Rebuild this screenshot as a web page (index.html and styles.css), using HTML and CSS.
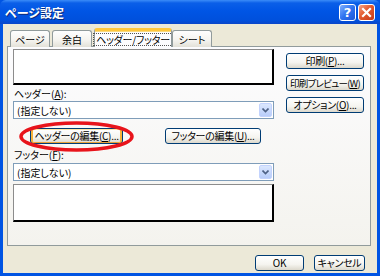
FILE: index.html
```html
<!DOCTYPE html>
<html lang="ja">
<head>
    <meta charset="UTF-8">
    <meta name="viewport" content="width=device-width, initial-scale=1.0">
    <title>ページ設定</title>
    <link rel="stylesheet" href="styles.css">
</head>
<body>
    <div class="window">
        <div class="titlebar">
            <span class="title">ページ設定</span>
            <div class="caption-buttons">
                <span class="cap help">?</span>
                <span class="cap close">
                    <svg width="11" height="11" viewBox="0 0 11 11"><path d="M2 2 L9 9 M9 2 L2 9" stroke="#fff" stroke-width="2.2" stroke-linecap="square"/></svg>
                </span>
            </div>
        </div>
        <div class="client">
            <div class="tabs">
                <div class="tab t-page">ページ</div>
                <div class="tab t-margin">余白</div>
                <div class="tab active"><span class="focus">ヘッダー/フッター</span></div>
                <div class="tab t-sheet">シート</div>
            </div>
            <div class="panel">
                <div class="left">
                    <div class="preview header-preview"></div>
                    <div class="label">ヘッダー(<u>A</u>):</div>
                    <div class="select">
                        <span>(指定しない)</span>
                        <span class="arrow">
                            <svg width="7" height="5" viewBox="0 0 7 5"><path d="M0.5 0.5 L3.5 3.5 L6.5 0.5" fill="none" stroke="#4d6185" stroke-width="1.6"/></svg>
                        </span>
                    </div>
                    <div class="edit-row">
                        <button class="btn edit-header">ヘッダーの編集(<u>C</u>)...</button>
                        <button class="btn edit-footer">フッターの編集(<u>U</u>)...</button>
                        <svg class="mark" width="115" height="31" viewBox="0 0 115 31">
                            <ellipse cx="57.5" cy="15.5" rx="55.5" ry="13.5" fill="none" stroke="#e8141b" stroke-width="3.5"/>
                        </svg>
                    </div>
                    <div class="label footer-label">フッター(<u>F</u>):</div>
                    <div class="select">
                        <span>(指定しない)</span>
                        <span class="arrow">
                            <svg width="7" height="5" viewBox="0 0 7 5"><path d="M0.5 0.5 L3.5 3.5 L6.5 0.5" fill="none" stroke="#4d6185" stroke-width="1.6"/></svg>
                        </span>
                    </div>
                    <div class="preview footer-preview"></div>
                </div>
                <div class="right">
                    <button class="btn">印刷(<u>P</u>)...</button>
                    <button class="btn tight">印刷プレビュー(<u>W</u>)</button>
                    <button class="btn">オプション(<u>O</u>)...</button>
                </div>
            </div>
            <div class="actions">
                <button class="btn ok">OK</button>
                <button class="btn cancel">キャンセル</button>
            </div>
        </div>
    </div>
</body>
</html>
```

FILE: styles.css
```css
body {
    margin: 0;
    padding: 0;
    font-family: "Noto Sans CJK JP", "Noto Sans", sans-serif;
    font-size: 10px;
    color: #000;
    background: #ece9d8;
    white-space: nowrap;
}
.window {
    width: 380px;
    height: 276px;
    display: flex;
    flex-direction: column;
    box-sizing: border-box;
    background: #0054e3;
}
.titlebar {
    height: 24px;
    flex: none;
    display: flex;
    align-items: center;
    justify-content: space-between;
    background: linear-gradient(#3b8cf8 0, #0b5fe8 3px, #0055e5 45%, #0050dc 85%, #0a46c8 100%);
    border-radius: 6px 6px 0 0;
}
.title {
    color: #fff;
    font-weight: bold;
    font-size: 12px;
    padding-left: 5px;
    text-shadow: 1px 1px 0 #0b2a7a;
    font-feature-settings: "palt";
}
.caption-buttons {
    display: flex;
    gap: 2px;
    padding-right: 5px;
    margin-top: 1px;
}
.cap {
    width: 15px;
    height: 15px;
    border: 1px solid #fff;
    border-radius: 3px;
    display: flex;
    align-items: center;
    justify-content: center;
    color: #fff;
    font-family: "DejaVu Sans", sans-serif;
    font-weight: bold;
    font-size: 13px;
}
.help {
    background: linear-gradient(135deg, #7fb0ff 0, #2f73f0 50%, #1d55d8 100%);
}
.close {
    background: linear-gradient(135deg, #f5a386 0, #e35a2e 45%, #c53a1a 100%);
}
.client {
    flex: 1;
    margin: 0 3px 3px;
    background: #ece9d8;
    padding: 4px 6px 0 4px;
    display: flex;
    flex-direction: column;
}
.tabs {
    display: flex;
    align-items: flex-end;
    height: 19px;
    padding-left: 3px;
    margin-bottom: -1px;
    position: relative;
    z-index: 1;
}
.tab {
    height: 17px;
    box-sizing: border-box;
    border: 1px solid #919b9c;
    border-bottom: none;
    border-radius: 3px 3px 0 0;
    background: linear-gradient(#fefefe, #f4f3ee 60%, #e3e1d8);
    display: flex;
    align-items: center;
    justify-content: center;
    font-feature-settings: "palt";
    margin-right: 2px;
}
.t-page { width: 40px; }
.t-margin { width: 40px; }
.t-sheet { width: 40px; margin-left: -2px; }
.tab.active {
    width: 78px;
    height: 19px;
    margin-left: 0;
    background: #fcfcfe;
    border-top: 3px solid #ffc73c;
    box-shadow: inset 0 1px 0 #fbd97c;
    border-radius: 3px 3px 0 0;
    letter-spacing: -0.2px;
}
.focus {
    border: 1px dotted #555;
    padding: 0 2px;
    line-height: 11px;
}
.panel {
    height: 200px;
    box-sizing: border-box;
    border: 1px solid #919b9c;
    background: linear-gradient(#fcfcfe, #f4f3ee);
    display: flex;
    gap: 12px;
    padding: 2px 6px 0 5px;
}
.left {
    width: 263px;
    display: flex;
    flex-direction: column;
}
.preview {
    background: #fff;
    border-top: 1px solid #8c8c8c;
    border-left: 1px solid #8c8c8c;
    border-right: 2px solid #000;
    border-bottom: 2px solid #000;
    box-sizing: border-box;
}
.header-preview { height: 36px; }
.footer-preview { height: 38px; margin-top: 3px; }
.label {
    height: 16px;
    line-height: 13px;
    padding-top: 2px;
    box-sizing: border-box;
    padding-left: 1px;
    font-feature-settings: "palt";
}
.footer-label {
    height: 19px;
    padding-top: 4px;
}
.select {
    height: 18px;
    box-sizing: border-box;
    border: 1px solid #7f9db9;
    background: #fff;
    display: flex;
    align-items: center;
    justify-content: space-between;
    padding: 0 1px 0 3px;
    font-feature-settings: "palt";
}
.arrow {
    width: 13px;
    height: 14px;
    box-sizing: border-box;
    border: 1px solid #c3d3fd;
    border-radius: 2px;
    background: linear-gradient(#dbe7fe, #b8cdfa);
    display: flex;
    align-items: center;
    justify-content: center;
}
.edit-row {
    position: relative;
    display: flex;
    justify-content: space-between;
    margin-top: 9px;
    padding: 0 13px 0 17px;
}
.btn {
    font-family: inherit;
    font-size: 10px;
    height: 16px;
    padding: 0;
    box-sizing: border-box;
    border: 1px solid #003c74;
    border-radius: 3px;
    background: linear-gradient(#ffffff, #f5f4ef 60%, #dcd8cc);
    color: #000;
    display: flex;
    align-items: center;
    justify-content: center;
    font-feature-settings: "palt";
    line-height: 12px;
    white-space: nowrap;
    letter-spacing: -0.3px;
}
.btn.tight {
    letter-spacing: -0.7px;
    font-size: 9.5px;
}
.edit-header {
    width: 93px;
    box-shadow: inset 2px 0 0 #f7b23a, inset -2px 0 0 #f7b23a, inset 0 1px 0 #fee6a8, inset 0 -1px 0 #e8a33a;
}
.edit-footer { width: 96px; }
.mark {
    position: absolute;
    left: 6px;
    top: -7px;
}
.right {
    width: 78px;
    display: flex;
    flex-direction: column;
    gap: 6px;
    padding-top: 4px;
}
.right .btn { width: 78px; }
.actions {
    display: flex;
    justify-content: flex-end;
    gap: 10px;
    margin-top: 9px;
    padding-right: 6px;
}
.ok { width: 49px; }
.cancel { width: 51px; }
```
